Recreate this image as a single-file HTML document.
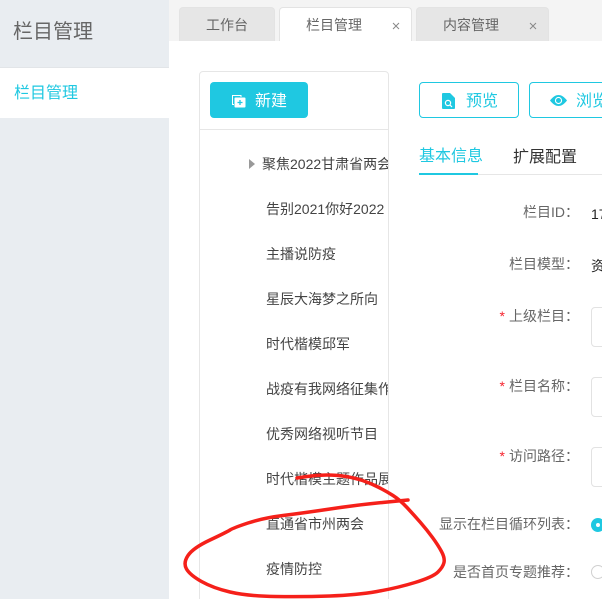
<!DOCTYPE html>
<html style="overflow:hidden;width:602px;height:599px"><head><meta charset="utf-8">
<style>
*{box-sizing:border-box}
html,body{margin:0;padding:0}
body{width:602px;height:599px;overflow:hidden;position:relative;background:#fff;font-family:"Liberation Sans","Noto Sans CJK SC",sans-serif;font-size:14px;color:#555}
#w{position:absolute;left:0;top:0;width:602px;height:599px;overflow:hidden}
.a{position:absolute;white-space:nowrap}
.tab{position:absolute;top:7px;height:34px;background:#e6e6e6;border:1px solid #e3e3e3;border-bottom:0;border-radius:4px 4px 0 0;line-height:35px;font-size:14px;color:#666}
.tree{position:absolute;left:266px;width:122px;overflow:hidden;white-space:nowrap;color:#444;line-height:20px;height:20px}
.lb{position:absolute;right:23px;white-space:nowrap;color:#666;line-height:20px}
.lb i{color:#f5222d;font-style:normal;margin-right:4px}
.inp{position:absolute;left:591px;width:40px;height:40px;border:1px solid #e2e2e2;border-radius:4px}
</style></head><body><div id="w">
<div class="a" style="left:0;top:0;width:169px;height:599px;background:#e9edf1"></div>
<div class="a" style="left:13px;top:18px;font-size:20px;line-height:28px;color:#666">栏目管理</div>
<div class="a" style="left:0;top:67px;width:169px;height:51px;background:#fff;border-top:1px solid #e2e5e8"></div>
<div class="a" style="left:14px;top:84px;font-size:16px;line-height:20px;color:#1fc8e1">栏目管理</div>

<div class="a" style="left:169px;top:0;width:433px;height:41px;background:#f4f4f4"></div>
<div class="tab" style="left:179px;width:96px;padding-left:26px">工作台</div>
<div class="tab" style="left:279px;width:133px;background:#fff;padding-left:26px">栏目管理</div>
<div class="tab" style="left:416px;width:133px;padding-left:26px">内容管理</div>
<svg class="a" style="left:392px;top:22px" width="8" height="8"><path d="M1 1L7 7M7 1L1 7" stroke="#888" stroke-width="1"/></svg>
<svg class="a" style="left:529px;top:22px" width="8" height="8"><path d="M1 1L7 7M7 1L1 7" stroke="#888" stroke-width="1"/></svg>

<div class="a" style="left:199px;top:71px;width:190px;height:540px;border:1px solid #e6e6e6;border-radius:4px"></div>
<div class="a" style="left:200px;top:129px;width:188px;height:1px;background:#e6e6e6"></div>
<div class="a" style="left:210px;top:82px;width:98px;height:36px;background:#1fc8e1;border-radius:4px;color:#fff;line-height:39px;padding-left:45px;font-size:16px">新建</div>
<svg class="a" style="left:231px;top:94px" width="15" height="14" viewBox="0 0 15 14"><path d="M3 10.500H1.500V1.500H10V3" fill="none" stroke="#fff" stroke-width="1"/><rect x="3.500" y="3.500" width="11" height="10" rx="1" fill="#fff"/><path d="M6.500 8.500h5M9 6v5" stroke="#1fc8e1" stroke-width="1.300"/></svg>

<svg class="a" style="left:248px;top:159px" width="8" height="10"><path d="M1 0L7 5L1 10Z" fill="#999"/></svg>
<div class="tree" style="left:262px;width:126px;top:154px">聚焦2022甘肃省两会</div>
<div class="tree" style="top:199px">告别2021你好2022</div>
<div class="tree" style="top:244px">主播说防疫</div>
<div class="tree" style="top:289px">星辰大海梦之所向</div>
<div class="tree" style="top:334px">时代楷模邱军</div>
<div class="tree" style="top:379px">战疫有我网络征集作品</div>
<div class="tree" style="top:424px">优秀网络视听节目</div>
<div class="tree" style="top:469px">时代楷模主题作品展</div>
<div class="tree" style="top:514px">直通省市州两会</div>
<div class="tree" style="top:559px">疫情防控</div>

<div class="a" style="left:419px;top:82px;width:100px;height:36px;border:1px solid #1fc8e1;border-radius:4px;color:#1fc8e1;line-height:37px;padding-left:46px;font-size:16px">预览</div>
<svg class="a" style="left:442px;top:93px" width="13" height="16" viewBox="0 0 13 16"><path d="M0 1a1 1 0 0 1 1-1h7l5 5v10a1 1 0 0 1-1 1H1a1 1 0 0 1-1-1Z" fill="#1fc8e1"/><circle cx="6" cy="10" r="2.600" fill="none" stroke="#fff" stroke-width="1.200"/><path d="M8 12l2 2" stroke="#fff" stroke-width="1.200"/></svg>
<div class="a" style="left:529px;top:82px;width:100px;height:36px;border:1px solid #1fc8e1;border-radius:4px;color:#1fc8e1;line-height:37px;padding-left:46px;font-size:16px">浏览</div>
<svg class="a" style="left:550px;top:95px" width="17" height="11" viewBox="0 0 17 11"><path d="M0 5.500C3 1.500 6 0 8.500 0S14 1.500 17 5.500C14 9.500 11 11 8.500 11S3 9.500 0 5.500Z" fill="#1fc8e1"/><circle cx="8.500" cy="5.500" r="3.600" fill="#fff"/><circle cx="8.500" cy="5.500" r="2.500" fill="#1fc8e1"/></svg>

<div class="a" style="left:419px;top:146px;font-size:16px;line-height:22px;color:#1fc8e1">基本信息</div>
<div class="a" style="left:513px;top:147px;font-size:16px;line-height:22px;color:#333">扩展配置</div>
<div class="a" style="left:419px;top:174px;width:183px;height:1px;background:#e6e6e6"></div>
<div class="a" style="left:419px;top:173px;width:59px;height:2px;background:#1fc8e1"></div>

<div class="lb" style="top:202px">栏目ID：</div>
<div class="a" style="left:591px;top:204px;color:#222;line-height:20px">17</div>
<div class="lb" style="top:254px">栏目模型：</div>
<div class="a" style="left:591px;top:256px;color:#222;line-height:20px">资讯</div>
<div class="lb" style="top:306px"><i>*</i>上级栏目：</div>
<div class="inp" style="top:307px"></div>
<div class="lb" style="top:376px"><i>*</i>栏目名称：</div>
<div class="inp" style="top:377px"></div>
<div class="lb" style="top:446px"><i>*</i>访问路径：</div>
<div class="inp" style="top:447px"></div>
<div class="lb" style="top:514px">显示在栏目循环列表：</div>
<div class="a" style="left:591px;top:518px;width:14px;height:14px;border-radius:50%;background:#1fc8e1"></div>
<div class="a" style="left:596px;top:523px;width:4px;height:4px;border-radius:50%;background:#fff"></div>
<div class="lb" style="top:562px">是否首页专题推荐：</div>
<div class="a" style="left:591px;top:565px;width:14px;height:14px;border-radius:50%;border:1px solid #d0d0d0;background:#fff"></div>

<svg class="a" style="left:0;top:0" width="602" height="599" viewBox="0 0 602 599"><path d="M297 478L307 476.500Q317 475 327 475Q337 475 346 476.500Q355 478 362.500 480.500Q370 483 378 487Q386 491 393 495.500Q400 500 407 507.500Q414 515 420.500 522.500Q427 530 432.500 537.500Q438 545 441.500 551.500Q445 558 444 562.500Q443 567 438 572Q433 577 415 582.500Q397 588 377 591.500Q357 595 330 596Q303 597 275 596.500Q247 596 230 592Q213 588 201.500 581.500Q190 575 186.500 569Q183 563 188 555.500Q193 548 210 540Q227 532 230 530Q233 528 248 523Q263 518 283 515.500Q303 513 330 509Q357 505 382.500 502.500L408 500" fill="none" stroke="#f5201a" stroke-width="3.500" stroke-linecap="round" stroke-linejoin="round"/></svg>
</div></body></html>
